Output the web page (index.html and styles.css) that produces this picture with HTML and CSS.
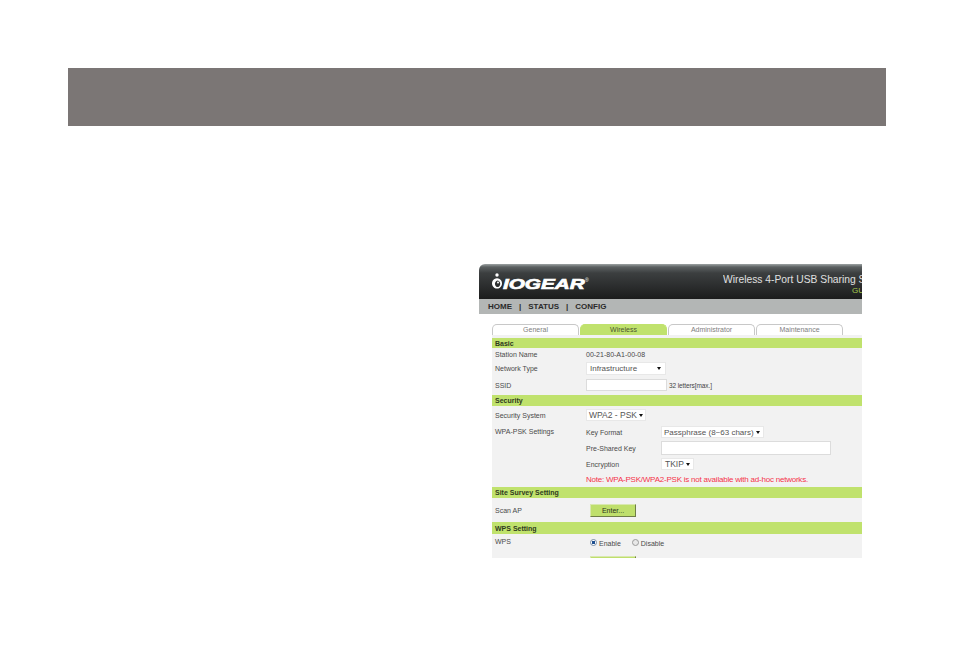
FILE: index.html
```html
<!DOCTYPE html>
<html>
<head>
<meta charset="utf-8">
<title>Wireless settings</title>
<link rel="stylesheet" href="styles.css">
</head>
<body>
<div class="banner"></div>
<div class="shot">
  <div class="head">
    <div class="logo">
      <svg class="logo-mark" width="12" height="16" viewBox="0 0 12 16"><circle cx="6" cy="2" r="1.7" fill="#fff"/><path d="M6 5.2a5 5.2 0 1 0 .01 0zM6.6 7.6a2.6 3.2 0 1 1-.01 0z" fill="#fff" fill-rule="evenodd"/><circle cx="7" cy="9.4" r="1" fill="#fff"/></svg>
      <span class="logo-text">IOGEAR</span><span class="logo-reg">®</span>
    </div>
    <div class="head-right">
      <div class="product">Wireless 4-Port USB Sharing Station</div>
      <div class="model">GUWIP204</div>
    </div>
  </div>
  <div class="nav"><span>HOME</span><span>|</span><span>STATUS</span><span>|</span><span>CONFIG</span></div>
  <div class="main">
    <div class="tabs">
      <div class="tab">General</div>
      <div class="tab active">Wireless</div>
      <div class="tab">Administrator</div>
      <div class="tab">Maintenance</div>
    </div>
    <div class="panel">
      <div class="bar bar-basic">Basic</div>
      <div class="row row-station"><span class="label">Station Name</span><span class="value">00-21-80-A1-00-08</span></div>
      <div class="row row-net"><span class="label">Network Type</span><span class="select sel-net">Infrastructure<i class="arrow"></i></span></div>
      <div class="row row-ssid"><span class="label">SSID</span><span class="input in-ssid"></span><span class="hint">32 letters[max.]</span></div>
      <div class="bar bar-sec">Security</div>
      <div class="row row-sys"><span class="label">Security System</span><span class="select sel-sys">WPA2 - PSK<i class="arrow"></i></span></div>
      <div class="wpa">
        <span class="label wpa-label">WPA-PSK Settings</span>
        <div class="wpa-rows">
          <div class="sub sub-fmt"><span class="sublabel">Key Format</span><span class="select sel-fmt">Passphrase (8~63 chars)<i class="arrow"></i></span></div>
          <div class="sub sub-psk"><span class="sublabel">Pre-Shared Key</span><span class="input in-psk"></span></div>
          <div class="sub sub-enc"><span class="sublabel">Encryption</span><span class="select sel-enc">TKIP<i class="arrow"></i></span></div>
          <div class="note">Note: WPA-PSK/WPA2-PSK is not available with ad-hoc networks.</div>
        </div>
      </div>
      <div class="bar bar-site">Site Survey Setting</div>
      <div class="row row-scan"><span class="label">Scan AP</span><span class="btn">Enter...</span></div>
      <div class="bar bar-wps">WPS Setting</div>
      <div class="row row-wps"><span class="label">WPS</span><span class="radios"><span class="radio on"></span><span class="rlabel">Enable</span><span class="radio"></span><span class="rlabel">Disable</span></span></div>
      <span class="btn btn-last"></span>
    </div>
  </div>
</div>
</body>
</html>
```
FILE: styles.css
```css
html, body { margin: 0; padding: 0; background: #fff; }
body { width: 954px; height: 664px; overflow: hidden; font-family: "Liberation Sans", Arial, sans-serif; }
.banner { height: 58px; margin: 68px 68px 0; background: #7b7675; }
.shot { width: 383px; height: 294px; margin: 138px 0 0 479px; overflow: hidden; background: #fff; color: #333; }

.head { height: 35px; border-radius: 6px 0 0 0; background: linear-gradient(#9da3a3 0, #5c6162 3px, #3c3f40 9px, #1b1c1c 100%); display: flex; justify-content: space-between; }
.logo { display: flex; align-items: flex-start; padding: 9px 0 0 12px; color: #fff; }
.logo-mark { flex: none; }
.logo-text { display: inline-block; width: 82px; font: italic bold 15px/14px "Liberation Sans", sans-serif; margin-top: 4px; -webkit-text-stroke: .7px #fff; transform: scaleX(1.38); transform-origin: left center; }
.logo-reg { font-size: 5px; line-height: 6px; margin-top: 4px; }
.head-right { width: 139px; flex: none; padding-top: 9px; overflow: hidden; }
.product { font-size: 10.3px; line-height: 13px; color: #e0e0e0; white-space: nowrap; }
.model { font-size: 8px; line-height: 9px; color: #a8cc50; padding-left: 129px; white-space: nowrap; }

.nav { height: 15px; background: #b3b6b5; display: flex; gap: 7px; padding-left: 9px; align-items: center; font-size: 8px; font-weight: bold; color: #2a2a2a; }

.main { padding: 10px 0 0 13px; }
.tabs { display: flex; gap: 1px; height: 11px; }
.tab { width: 87px; height: 11px; box-sizing: border-box; border: 1px solid #c8c8c8; border-bottom: 0; border-radius: 5px 5px 0 0; font-size: 7px; line-height: 10px; text-align: center; color: #808080; background: #fff; }
.tab.active { background: #c0e26d; border-color: #c0e26d; color: #4a5530; }
.panel { background: #f2f2f2; padding-top: 3px; height: 300px; font-size: 7px; color: #4a4a4a; }
.bar { background: #c0e26d; color: #2e3a20; font-weight: bold; font-size: 7px; padding-left: 3px; box-sizing: border-box; display: flex; align-items: center; }
.bar-basic { height: 10px; }
.bar-sec { height: 11px; margin-top: 4px; }
.bar-site { height: 11px; margin-top: 2px; }
.bar-wps { height: 12px; margin-top: 5px; }

.row { display: flex; align-items: center; }
.label { width: 94px; flex: none; padding-left: 3px; box-sizing: border-box; }
.row-station { height: 13px; }
.row-net { height: 13px; margin-top: 1px; }
.row-ssid { height: 12px; margin-top: 4px; }
.row-sys { height: 12px; margin-top: 3px; }
.row-scan { height: 13px; margin-top: 6px; }
.row-wps { height: 12px; margin-top: 1px; }

.select { display: inline-flex; align-items: center; justify-content: space-between; box-sizing: border-box; background: #fff; color: #555; padding: 0 4px 0 3px; font-size: 8px; height: 13px; border: 1px solid #e8e8e8; white-space: nowrap; }
.arrow { width: 0; height: 0; border: 2.5px solid transparent; border-top: 3px solid #111; border-bottom: 0; flex: none; margin-left: 2px; }
.input { display: inline-block; box-sizing: border-box; background: #fff; border: 1px solid #dcdcdc; }
.sel-net { width: 80px; }
.in-ssid { width: 81px; height: 12px; margin-right: 2px; }
.hint { font-size: 6.5px; letter-spacing: -.1px; color: #444; }
.sel-sys { width: 60px; height: 12px; font-size: 8.5px; padding-left: 2px; }

.wpa { display: flex; margin-top: 5px; }
.wpa-label { line-height: 12px; }
.sub { display: flex; align-items: center; }
.sublabel { width: 75px; flex: none; }
.sub-fmt { height: 12px; }
.sub-psk { height: 14px; margin-top: 3px; }
.sub-enc { height: 12px; margin-top: 3px; }
.sel-fmt { width: 103px; height: 12px; font-size: 8px; padding-left: 2px; }
.in-psk { width: 170px; height: 14px; }
.sel-enc { width: 33px; height: 12px; font-size: 8.5px; }
.note { color: #f5324a; font-size: 8px; line-height: 10px; margin-top: 5px; white-space: nowrap; letter-spacing: -.22px; }

.btn { display: inline-flex; align-items: center; justify-content: center; width: 46px; height: 13px; margin-left: 4px; box-sizing: border-box; background: #bfdf6c; border: 1px solid #d9e8b0; border-right-color: #6f7c48; border-bottom-color: #6f7c48; color: #2d331d; font-size: 7px; }
.btn-last { display: flex; margin: 9px 0 0 98px; }
.radios { display: flex; align-items: center; margin-left: 4px; padding-top: 3px; }
.radio { width: 7px; height: 7px; box-sizing: border-box; border-radius: 50%; border: 1px solid #9a9a9a; background: #e8e8e8; }
.radio.on { background: radial-gradient(circle, #1d4f91 0 1.6px, #fff 2px); border-color: #7a8ea5; }
.rlabel { margin: 2px 11px 0 2px; }
```
